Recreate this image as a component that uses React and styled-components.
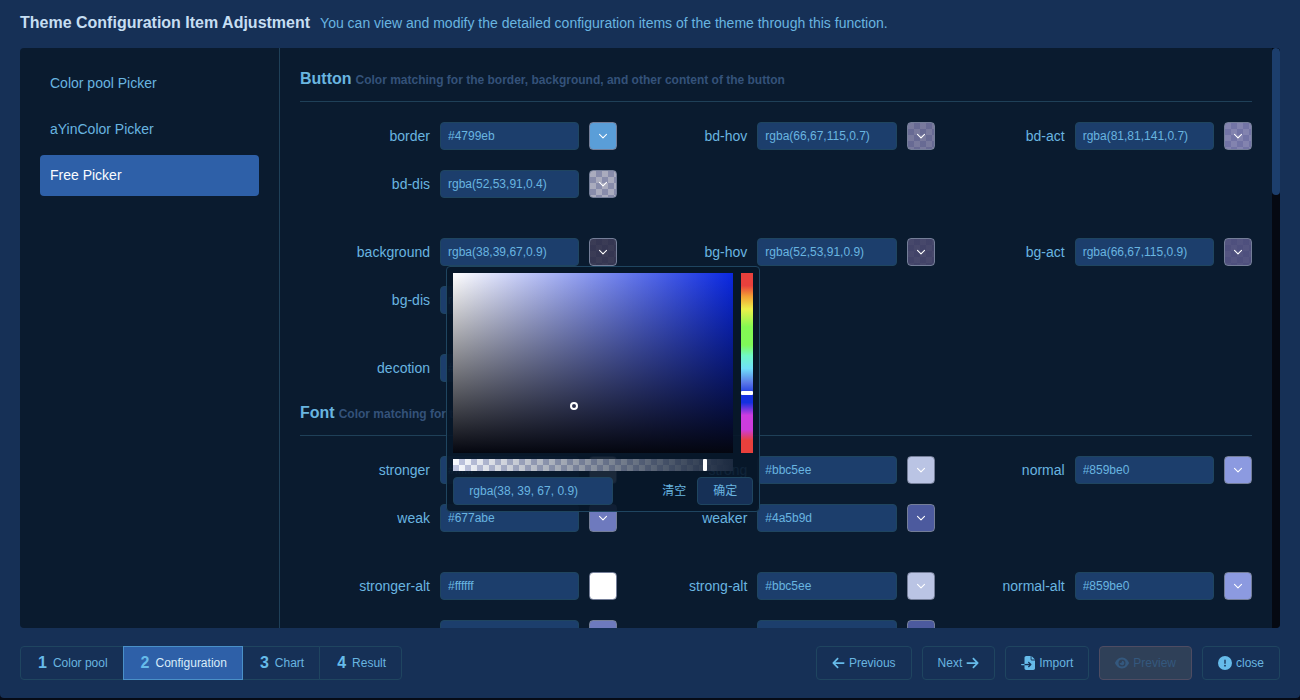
import React, { useState } from "react";
import styled, { createGlobalStyle, css } from "styled-components";
import {
  FaArrowLeft,
  FaArrowRight,
  FaFileImport,
  FaEye,
  FaCircleExclamation,
} from "react-icons/fa6";

const GlobalStyle = createGlobalStyle`
  *, *::before, *::after { box-sizing: border-box; }
  body {
    margin: 0;
    background: #060b16;
    color: #69b5e0;
    font-family: "Liberation Sans", Arial, "Noto Sans CJK SC", sans-serif;
    font-size: 14px;
    line-height: 20px;
  }
  button, input { font: inherit; color: inherit; }
`;

const Page = styled.div`
  height: 100vh;
  padding-bottom: 2px;
`;

const Dialog = styled.main`
  height: 100%;
  display: flex;
  flex-direction: column;
  padding: 0 20px 18px;
  background: #163056;
  border-radius: 0 0 4px 4px;
`;

const Header = styled.header`
  display: flex;
  align-items: baseline;
  gap: 10px;
  padding: 12px 0 14px;
  white-space: nowrap;
`;

const Title = styled.h1`
  margin: 0;
  font-size: 16px;
  line-height: 22px;
  color: #c6def2;
`;

const Subtitle = styled.p`
  margin: 0;
`;

const Panel = styled.div`
  flex: 1;
  min-height: 0;
  display: flex;
  overflow: hidden;
  background: #0a1b2f;
  border-radius: 4px;
`;

const Sidebar = styled.nav`
  flex: none;
  width: 260px;
  display: flex;
  flex-direction: column;
  gap: 5px;
  padding: 15px 20px;
  border-right: 1px solid #1f4058;
`;

const SideLink = styled.a`
  padding: 10px;
  line-height: 21px;
  border-radius: 4px;
  color: ${(p) => (p.$active ? "#fafcff" : "#69b5e0")};
  background: ${(p) => (p.$active ? "#2e60a8" : "transparent")};
  text-decoration: none;
`;

const Content = styled.div`
  flex: 1;
  min-width: 0;
  overflow: hidden;
  padding: 0 20px;
`;

const ScrollTrack = styled.div`
  flex: none;
  width: 8px;
  background: #050912;
`;

const ScrollThumb = styled.div`
  height: 147px;
  border-radius: 4px;
  background: #1c3e6c;
`;

const SectionTitle = styled.h2`
  display: flex;
  align-items: baseline;
  gap: 4px;
  margin: 20px 0;
  height: 34px;
  border-bottom: 1px solid #1f4058;
  font-size: 16px;
  line-height: 22px;
  white-space: nowrap;
`;

const SectionNote = styled.small`
  font-size: 12px;
  color: #34527a;
`;

const FieldGroup = styled.div`
  display: grid;
  grid-template-columns: repeat(3, minmax(0, 1fr));
  row-gap: 20px;
  & + & { margin-top: 40px; }
`;

const Field = styled.div`
  display: flex;
  align-items: center;
  gap: 10px;
  height: 28px;
`;

const FieldLabel = styled.label`
  flex: none;
  width: 130px;
  text-align: right;
  white-space: nowrap;
`;

const TextInput = styled.input`
  flex: 1;
  min-width: 0;
  height: 28px;
  padding: 0 7px;
  border: 1px solid #1f4560;
  border-radius: 4px;
  background: #1c3e6c;
  font-size: 12px;
  outline: none;
`;

const checker = css`
  repeating-conic-gradient(#c0c6e0 0 25%, #f8faff 0 50%) 0 0 / 12px 12px
`;

const SwatchAnchor = styled.div`
  position: relative;
  flex: none;
  display: flex;
`;

const Swatch = styled.button`
  display: flex;
  align-items: center;
  justify-content: center;
  width: 28px;
  height: 28px;
  padding: 0 0 1px;
  border: 1px solid #747e98;
  border-radius: 4px;
  color: #fff;
  background:
    linear-gradient(${(p) => p.$color}, ${(p) => p.$color}),
    ${checker};
`;

const Popup = styled.div`
  position: absolute;
  z-index: 2;
  top: 100%;
  left: 50%;
  transform: translateX(-50%);
  width: 314px;
  display: grid;
  gap: 6px;
  padding: 6px;
  border: 1px solid #1f4560;
  border-radius: 4px;
  background: rgba(8, 23, 41, 0.92);
`;

const PickRow = styled.div`
  display: flex;
  gap: 8px;
`;

const Saturation = styled.div`
  position: relative;
  flex: 1;
  height: 180px;
  background:
    linear-gradient(to top, #04060f, rgba(4, 6, 15, 0)),
    linear-gradient(to right, #fff, rgba(255, 255, 255, 0)),
    #0a28e2;
`;

const Cursor = styled.span`
  position: absolute;
  width: 8px;
  height: 8px;
  margin: -4px;
  border: 2px solid #fff;
  border-radius: 50%;
`;

const Hue = styled.div`
  position: relative;
  width: 12px;
  background: linear-gradient(
    #e8403c 0 7%, #f2a034 13%, #ecf04a 20%, #84f852 30%, #80f858 40%,
    #70f8c8 46%, #70e0fa 53%, #5a78e8 61%, #1430e0 68%, #1430e0 72%,
    #cc3ce0 79%, #cc3cdc 87%, #e8403c 93%
  );
`;

const HueThumb = styled.span`
  position: absolute;
  left: 0;
  width: 12px;
  height: 4px;
  background: #fff;
  border-radius: 1px;
`;

const Alpha = styled.div`
  position: relative;
  width: 280px;
  height: 12px;
  background:
    linear-gradient(to right, rgba(38, 39, 67, 0), #1c2a40),
    ${checker};
`;

const AlphaThumb = styled.span`
  position: absolute;
  top: 0;
  width: 4px;
  height: 12px;
  background: #fff;
  border-radius: 1px;
`;

const PopupFooter = styled.div`
  display: flex;
  align-items: center;
  font-size: 12px;
`;

const PopupInput = styled(TextInput)`
  flex: none;
  width: 160px;
  padding: 0 15px;
`;

const ClearButton = styled.button`
  margin-left: auto;
  padding: 0 11px;
  border: 0;
  background: none;
`;

const ConfirmButton = styled.button`
  height: 28px;
  padding: 0 15px;
  border: 1px solid #1f4560;
  border-radius: 4px;
  background: #163056;
`;

const Footer = styled.footer`
  display: flex;
  justify-content: space-between;
  padding-top: 18px;
  font-size: 12px;
  white-space: nowrap;
`;

const Steps = styled.div`
  display: flex;
`;

const Step = styled.button`
  display: flex;
  align-items: center;
  gap: 6px;
  height: 34px;
  padding: 0 15px 0 17px;
  border: 1px solid ${(p) => (p.$active ? "#4a90c8" : "#1f4560")};
  background: ${(p) => (p.$active ? "#2e60a8" : "#163056")};
  color: ${(p) => (p.$active ? "#d8ecfa" : "#69b5e0")};
  & + & { margin-left: -1px; }
  &:first-child { border-radius: 4px 0 0 4px; }
  &:last-child { border-radius: 0 4px 4px 0; }
  ${(p) => p.$active && "position: relative;"}
`;

const StepNumber = styled.b`
  font-size: 16px;
  color: #66bbea;
`;

const Actions = styled.div`
  display: flex;
  gap: 10px;
`;

const Action = styled.button`
  display: flex;
  align-items: center;
  gap: 4px;
  height: 34px;
  padding: 0 15px;
  border: 1px solid #1f4560;
  border-radius: 4px;
  background: #163056;
  svg {
    width: ${(p) => (p.$arrow ? 13 : 14)}px;
    height: 14px;
    color: #66bbea;
  }
  &:disabled {
    color: #34587e;
    border-color: #4e4c62;
    background: #2f4058;
    svg { color: #34587e; }
  }
`;

function Chevron() {
  return (
    <svg width="12" height="12" viewBox="0 0 12 12" fill="none" stroke="currentColor" strokeWidth="1.1" aria-hidden="true">
      <path d="M2.5 4.3L6 7.8l3.5-3.5" strokeLinecap="round" strokeLinejoin="round" />
    </svg>
  );
}

const sections = [
  {
    title: "Button",
    note: "Color matching for the border, background, and other content of the button",
    groups: [
      [
        ["border", "#4799eb", "#5a9ed8"],
        ["bd-hov", "rgba(66,67,115,0.7)"],
        ["bd-act", "rgba(81,81,141,0.7)"],
        ["bd-dis", "rgba(52,53,91,0.4)"],
      ],
      [
        ["background", "rgba(38,39,67,0.9)"],
        ["bg-hov", "rgba(52,53,91,0.9)"],
        ["bg-act", "rgba(66,67,115,0.9)"],
        ["bg-dis", "rgba(38,39,67,0.4)"],
      ],
      [["decotion", "#4799eb", "#0a1b2f"]],
    ],
  },
  {
    title: "Font",
    note: "Color matching for the font",
    groups: [
      [
        ["stronger", "#ffffff"],
        ["strong", "#bbc5ee", "#bac4e4"],
        ["normal", "#859be0", "#8c9ae0"],
        ["weak", "#677abe", "#6e7abe"],
        ["weaker", "#4a5b9d", "#4c5a9e"],
      ],
      [
        ["stronger-alt", "#ffffff"],
        ["strong-alt", "#bbc5ee", "#bac4e4"],
        ["normal-alt", "#859be0", "#8c9ae0"],
        ["weak-alt", "#677abe", "#6e7abe"],
        ["weaker-alt", "#4a5b9d", "#4c5a9e"],
      ],
    ],
  },
];

function ColorPopup() {
  const pick = { x: 43, y: 74, hue: 65.5, alpha: 89 };
  return (
    <Popup role="dialog" aria-label="Color picker">
      <PickRow>
        <Saturation>
          <Cursor style={{ left: `${pick.x}%`, top: `${pick.y}%` }} />
        </Saturation>
        <Hue>
          <HueThumb style={{ top: `${pick.hue}%` }} />
        </Hue>
      </PickRow>
      <Alpha>
        <AlphaThumb style={{ left: `${pick.alpha}%` }} />
      </Alpha>
      <PopupFooter>
        <PopupInput aria-label="Color value" defaultValue="rgba(38, 39, 67, 0.9)" />
        <ClearButton type="button">清空</ClearButton>
        <ConfirmButton type="button">确定</ConfirmButton>
      </PopupFooter>
    </Popup>
  );
}

function ColorField({ name, value, swatch, open, onToggle }) {
  return (
    <Field>
      <FieldLabel htmlFor={name}>{name}</FieldLabel>
      <TextInput id={name} defaultValue={value} />
      <SwatchAnchor>
        <Swatch type="button" aria-label={`Pick ${name}`} $color={swatch || value} onClick={onToggle}>
          <Chevron />
        </Swatch>
        {open && <ColorPopup />}
      </SwatchAnchor>
    </Field>
  );
}

export default function App() {
  const [openField, setOpenField] = useState("background");
  return (
    <Page>
      <GlobalStyle />
      <Dialog>
        <Header>
          <Title>Theme Configuration Item Adjustment</Title>
          <Subtitle>
            You can view and modify the detailed configuration items of the theme through this function.
          </Subtitle>
        </Header>
        <Panel>
          <Sidebar>
            <SideLink href="#pool">Color pool Picker</SideLink>
            <SideLink href="#ayin">aYinColor Picker</SideLink>
            <SideLink href="#free" $active>Free Picker</SideLink>
          </Sidebar>
          <Content>
            {sections.map((section) => (
              <section key={section.title}>
                <SectionTitle>
                  {section.title}
                  <SectionNote>{section.note}</SectionNote>
                </SectionTitle>
                {section.groups.map((group, i) => (
                  <FieldGroup key={i}>
                    {group.map(([name, value, swatch]) => (
                      <ColorField
                        key={name}
                        name={name}
                        value={value}
                        swatch={swatch}
                        open={openField === name}
                        onToggle={() => setOpenField(openField === name ? null : name)}
                      />
                    ))}
                  </FieldGroup>
                ))}
              </section>
            ))}
          </Content>
          <ScrollTrack>
            <ScrollThumb />
          </ScrollTrack>
        </Panel>
        <Footer>
          <Steps>
            <Step type="button"><StepNumber>1</StepNumber>Color pool</Step>
            <Step type="button" $active><StepNumber>2</StepNumber>Configuration</Step>
            <Step type="button"><StepNumber>3</StepNumber>Chart</Step>
            <Step type="button"><StepNumber>4</StepNumber>Result</Step>
          </Steps>
          <Actions>
            <Action type="button" $arrow><FaArrowLeft />Previous</Action>
            <Action type="button" $arrow>Next<FaArrowRight /></Action>
            <Action type="button"><FaFileImport />Import</Action>
            <Action type="button" disabled><FaEye />Preview</Action>
            <Action type="button"><FaCircleExclamation />close</Action>
          </Actions>
        </Footer>
      </Dialog>
    </Page>
  );
}
